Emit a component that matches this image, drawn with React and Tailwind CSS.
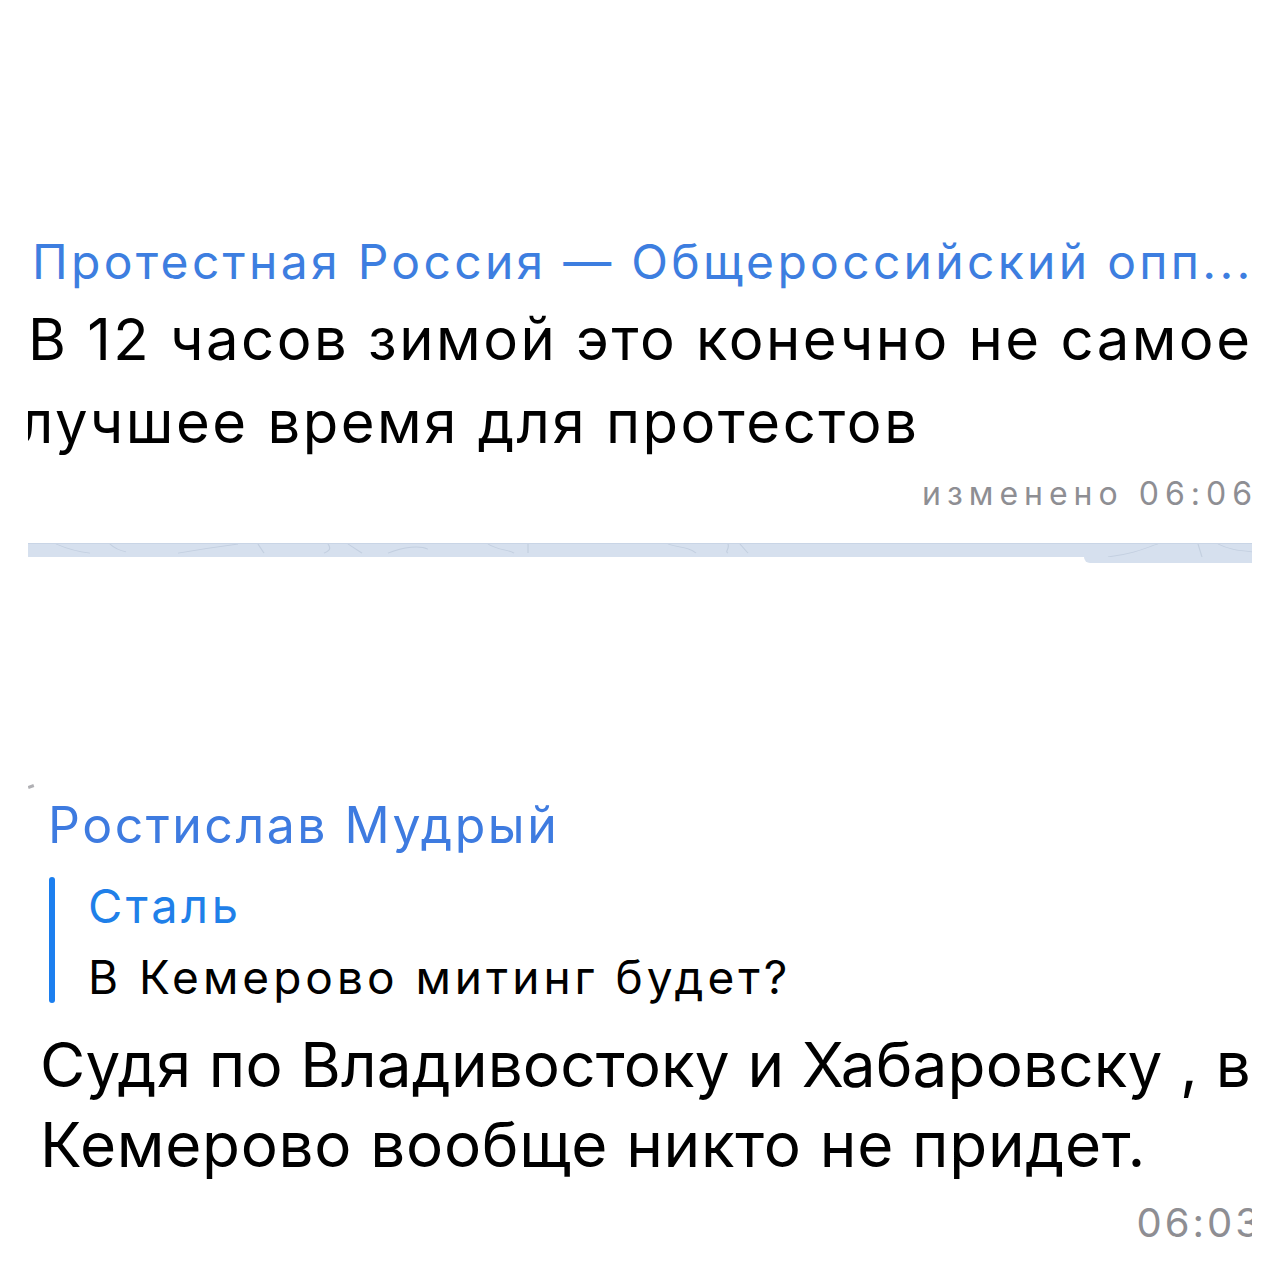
import React from 'react';

const font = { fontFamily: 'Inter, "Liberation Sans", Arial, sans-serif' };

const Doodles = () => (
  <svg className="absolute inset-0 w-full h-full" viewBox="0 0 1224 20" preserveAspectRatio="none" fill="none" stroke="#c3cfe0" strokeWidth="1.2">
    <path d="M28 0 C40 8 50 12 62 14" />
    <path d="M82 0 C86 6 92 10 98 12" />
    <path d="M150 14 C180 6 200 2 210 0" />
    <path d="M230 0 L236 14" />
    <path d="M300 0 C304 8 300 12 296 14" />
    <path d="M320 0 L334 14" />
    <path d="M360 14 C376 4 392 2 400 8" />
    <path d="M460 0 C470 10 480 8 486 14" />
    <path d="M500 0 L500 14" />
    <path d="M640 0 C650 6 660 4 668 14" />
    <path d="M700 0 C702 8 696 12 700 14" />
    <path d="M712 0 L720 14" />
    <path d="M1080 20 C1110 14 1120 4 1130 0" />
    <path d="M1170 0 L1174 20" />
    <path d="M1190 0 C1200 8 1210 10 1224 12" />
  </svg>
);

export default function App() {
  return (
    <div className="w-[1280px] h-[1280px] bg-white overflow-hidden" style={font}>
      <div className="ml-[28px] w-[1224px] overflow-hidden pt-[228px]">
        {/* first message */}
        <div className="text-[48px] leading-[67px] tracking-[3.3px] text-[#3d7ee0] pl-[4px] whitespace-nowrap">
          Протестная Россия — Общероссийский опп...
        </div>
        <div className="mt-[3px] text-[58px] leading-[83px] tracking-[2.5px] text-black whitespace-nowrap">
          <div>В 12 часов зимой это конечно не самое</div>
          <div className="-ml-[8px]">лучшее время для протестов</div>
        </div>
        <div className="mt-[10px] text-[32px] leading-[40px] tracking-[6px] text-[#8e8e93] text-right -mr-[6px]">
          изменено 06:06
        </div>

        {/* chat background strip */}
        <div className="mt-[29px] flex flex-col">
          <div className="relative h-[14px] bg-[#d6e0ee] border-t border-[#c9d5e6]">
            <Doodles />
          </div>
          <div className="flex justify-end">
            <div className="w-[168px] h-[6px] bg-[#d6e0ee] rounded-bl-[10px]" />
          </div>
        </div>

        {/* second message */}
        <div className="mt-[234px] pl-[12px]">
          <div className="relative">
            <div className="absolute -top-[12px] left-[-12px] w-[6px] h-[3px] bg-[#b0b0b4] -rotate-[20deg]" />
          </div>
          <div className="text-[50px] leading-[56px] tracking-[2.5px] text-[#3e7be0] pl-[8px] whitespace-nowrap">
            Ростислав Мудрый
          </div>
          <div className="mt-[20px] flex pl-[9px]">
            <div className="w-[6px] mt-[4px] mb-[12px] rounded-full bg-[#1c7fef]" />
            <div className="pl-[33px]">
              <div className="text-[47px] leading-[66px] tracking-[3.5px] text-[#1f80e9]">Сталь</div>
              <div className="text-[46px] leading-[76px] tracking-[4px] text-black whitespace-nowrap">В Кемерово митинг будет?</div>
            </div>
          </div>
          <div className="mt-[10px] text-[62px] leading-[80px] text-black whitespace-nowrap">
            <div className="tracking-[0.15px]">Судя по Владивостоку и Хабаровску , в</div>
            <div className="tracking-[0.7px]">Кемерово вообще никто не придет.</div>
          </div>
          <div className="mt-[13px] text-[40px] leading-[50px] tracking-[3px] text-[#8e8e93] text-right -mr-[11px]">
            06:03
          </div>
        </div>
      </div>
    </div>
  );
}
